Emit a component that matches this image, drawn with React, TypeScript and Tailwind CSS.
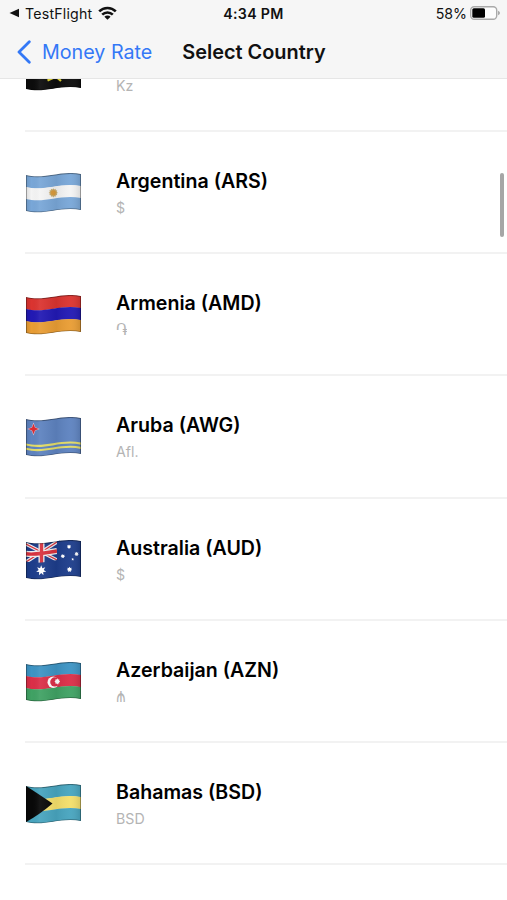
import React from 'react';

// Horizontal wave shared by the flag outline and its stripes
const band = (top: number, bottom: number) =>
  `M0 ${top} C8 ${top + 2.2} 18 ${top + 1.4} 27 ${top - 0.2} S46 ${top - 3} 55 ${top - 0.9} ` +
  `V${bottom - 0.9} C46 ${bottom - 3} 36 ${bottom - 1.8} 27 ${bottom - 0.2} S8 ${bottom + 2.2} 0 ${bottom} Z`;

const star = (cx: number, cy: number, r: number, points: number, inner = 0.45) =>
  Array.from({ length: points * 2 }, (_, i) => {
    const a = (Math.PI * i) / points - Math.PI / 2;
    const d = i % 2 ? r * inner : r;
    return `${(cx + d * Math.cos(a)).toFixed(2)},${(cy + d * Math.sin(a)).toFixed(2)}`;
  }).join(' ');

function Stripes({ colors }: { colors: string[] }) {
  const h = 36 / colors.length;
  return (
    <>
      {colors.map((color, i) => (
        <path key={i} d={band(2 + i * h, 2 + (i + 1) * h + 0.2)} fill={color} />
      ))}
    </>
  );
}

function Flag({ code, children }: { code: string; children: React.ReactNode }) {
  return (
    <svg viewBox="0 0 55 40" className="block h-10 w-[55px]">
      <defs>
        <clipPath id={`clip-${code}`}>
          <path d={band(2, 38)} />
        </clipPath>
        <linearGradient id={`shade-${code}`}>
          <stop offset="0" stopColor="#000" stopOpacity="0.1" />
          <stop offset="0.1" stopColor="#000" stopOpacity="0" />
          <stop offset="0.25" stopColor="#fff" stopOpacity="0.06" />
          <stop offset="0.55" stopColor="#000" stopOpacity="0.06" />
          <stop offset="0.8" stopColor="#fff" stopOpacity="0.04" />
          <stop offset="1" stopColor="#000" stopOpacity="0.12" />
        </linearGradient>
      </defs>
      <g clipPath={`url(#clip-${code})`}>
        {children}
        <path d={band(2, 38)} fill={`url(#shade-${code})`} />
        <path d={band(2, 38)} fill="none" stroke="#000" strokeOpacity="0.35" strokeWidth="1.8" />
      </g>
    </svg>
  );
}

const countries = [
  {
    code: 'AO',
    name: '',
    symbol: 'Kz',
    flag: (
      <>
        <Stripes colors={['#c8102e', '#0c0c0c']} />
        <path d="M20 24 Q27 29 35 24 M21.5 29.5 L27 27 M31 26.5 L35 30" fill="none" stroke="#d8cc2c" strokeWidth="2.2" />
      </>
    ),
  },
  {
    code: 'AR',
    name: 'Argentina (ARS)',
    symbol: '$',
    flag: (
      <>
        <Stripes colors={['#79a7d8', '#f4f4f4', '#79a7d8']} />
        <polygon points={star(27.3, 19.8, 4.6, 12, 0.75)} fill="#c9aa6a" />
        <circle cx="27.3" cy="19.8" r="2.5" fill="#d99a3c" />
      </>
    ),
  },
  {
    code: 'AM',
    name: 'Armenia (AMD)',
    symbol: '֏',
    flag: <Stripes colors={['#db3430', '#2219b4', '#e99d34']} />,
  },
  {
    code: 'AW',
    name: 'Aruba (AWG)',
    symbol: 'Afl.',
    flag: (
      <>
        <path d={band(2, 38)} fill="#5e83c0" />
        <path d={band(26.5, 28.6)} fill="#e3dc66" />
        <path d={band(30.7, 32.8)} fill="#e3dc66" />
        <polygon points={star(7.5, 12, 6.4, 4, 0.4)} fill="#dcc3d2" />
        <polygon points={star(7.5, 12, 5.2, 4, 0.38)} fill="#dc2b32" />
      </>
    ),
  },
  {
    code: 'AU',
    name: 'Australia (AUD)',
    symbol: '$',
    flag: (
      <>
        <path d={band(2, 38)} fill="#1d3d8b" />
        <g transform="translate(0 1)">
          <path d="M0 3 L31 19 M0 21 L31 1" stroke="#eee" strokeWidth="3.6" />
          <path d="M0 3 L31 19 M0 21 L31 1" stroke="#d8323f" strokeWidth="1.3" />
          <path d="M15.5 0 V22 M0 12.8 Q10 14 31 10" fill="none" stroke="#eee" strokeWidth="6" />
          <path d="M15.5 0 V22 M0 12.8 Q10 14 31 10" fill="none" stroke="#d8323f" strokeWidth="3.4" />
        </g>
        <path d="M0 21.5 Q12 24.5 31 20 V25 H0 Z" fill="#1d3d8b" />
        <path d="M31 0 H34 V22 H31 Z" fill="#1d3d8b" />
        <polygon points={star(15.2, 30.5, 5.2, 7, 0.5)} fill="#fff" />
        <polygon points={star(43, 6.7, 2.3, 7, 0.6)} fill="#fff" />
        <polygon points={star(36.8, 16.2, 2.3, 7, 0.6)} fill="#fff" />
        <polygon points={star(50.6, 14, 2.3, 7, 0.6)} fill="#fff" />
        <polygon points={star(46.7, 19.2, 1.5, 5)} fill="#fff" />
        <polygon points={star(43.5, 29.5, 2.8, 7, 0.6)} fill="#fff" />
      </>
    ),
  },
  {
    code: 'AZ',
    name: 'Azerbaijan (AZN)',
    symbol: '₼',
    flag: (
      <>
        <Stripes colors={['#3d94c4', '#db2f48', '#40a264']} />
        <circle cx="27.2" cy="20.2" r="5.7" fill="#fff" />
        <circle cx="28.8" cy="19.9" r="4.6" fill="#db2f48" />
        <polygon points={star(31.3, 19.5, 2.9, 8, 0.7)} fill="#fff" />
      </>
    ),
  },
  {
    code: 'BS',
    name: 'Bahamas (BSD)',
    symbol: 'BSD',
    flag: (
      <>
        <Stripes colors={['#48a5bf', '#f4df6b', '#48a5bf']} />
        <path d="M0 2 Q8 7 26.5 19.5 Q13 31 0 38 Z" fill="#080808" />
      </>
    ),
  },
];

// Glyphs that come out short next to the Latin symbols
const symbolStyles: Record<string, string> = {
  '֏': 'inline-block origin-left scale-x-110 scale-y-120',
  '₼': 'inline-block origin-[0_70%] scale-x-95 scale-y-140',
};

function StatusBar() {
  return (
    <div className="grid h-[27px] grid-cols-3 items-center pr-[7px] pl-[9px] text-[14.2px] text-[#111]">
      <div className="flex items-center">
        <svg viewBox="0 0 10 10" className="mr-1.5 h-[10px] w-[10px]">
          <path d="M10 0.7 V9.3 L0.5 5 Z" fill="#111" />
        </svg>
        <span className="tracking-[0.2px]">TestFlight</span>
        <svg viewBox="0 0 19 14" className="mb-px ml-1.5 h-[14px] w-[19px]" fill="none" stroke="#111" strokeWidth="2.6">
          <path d="M1.2 5.4 A11.8 11.8 0 0 1 17.8 5.4" />
          <path d="M4.2 8.6 A7.6 7.6 0 0 1 14.8 8.6" />
          <path d="M9.5 13.8 L6.4 10.7 A4.4 4.4 0 0 1 12.6 10.7 Z" fill="#111" stroke="none" />
        </svg>
      </div>
      <div className="pr-[2px] text-center font-semibold tracking-[0.3px]">4:34 PM</div>
      <div className="flex items-center justify-end gap-[3px]">
        <span>58%</span>
        <svg viewBox="0 0 30 14" className="mb-px h-[14px] w-[30px]">
          <rect x="0.7" y="0.7" width="26" height="12.6" rx="3.5" fill="#fdfdfd" stroke="#aaa" strokeWidth="1.4" />
          <rect x="2.3" y="2.3" width="12.7" height="9.4" rx="1.5" fill="#000" />
          <path d="M28 4.7 Q30 5.5 30 7 Q30 8.5 28 9.3 Z" fill="#aaa" />
        </svg>
      </div>
    </div>
  );
}

export default function App() {
  return (
    <div className="relative flex h-[900px] w-[507px] flex-col overflow-hidden bg-white font-['Inter','DejaVu_Sans',sans-serif]">
      <header className="z-10 h-[79px] shrink-0 border-b border-[#e6e6e6] bg-[#f6f6f6]">
        <StatusBar />
        <nav className="flex h-[51px] items-center pl-[17px] text-[19.7px]">
          <button className="flex items-center text-[#3478f6]">
            <svg viewBox="0 0 14 24" className="mr-[11px] h-[24px] w-[14px]" fill="none" stroke="#3478f6" strokeWidth="2.8" strokeLinecap="round" strokeLinejoin="round">
              <path d="M12.3 1.8 L2 12 L12.3 22.2" />
            </svg>
            <span>Money Rate</span>
          </button>
          <h1 className="ml-[30px] text-[19.9px] font-semibold text-[#111]">Select Country</h1>
        </nav>
      </header>

      <main className="min-h-0 flex-1 overflow-hidden">
        <ul className="-mt-[69.2px]">
          {countries.map(({ code, name, symbol, flag }) => (
            <li key={code} className="ml-[25px] flex h-[122.2px] items-center border-b-2 border-[#f2f2f2] pl-px">
              <div className="pt-[2px]">
                <Flag code={code}>{flag}</Flag>
              </div>
              <div className="ml-[35px] pt-[4px]">
                <p className="h-[26px] text-[19.6px] leading-[26px] font-semibold text-black">{name}</p>
                <p className="h-[26px] text-[14.2px] leading-[27px] text-[#b4b4b4]">
                  <span className={symbolStyles[symbol]}>{symbol}</span>
                </p>
              </div>
            </li>
          ))}
        </ul>
      </main>

      {/* Scroll indicator */}
      <div className="absolute top-[173px] right-[3px] h-[64px] w-[4px] rounded-full bg-[#a6a6a6]" />
    </div>
  );
}
